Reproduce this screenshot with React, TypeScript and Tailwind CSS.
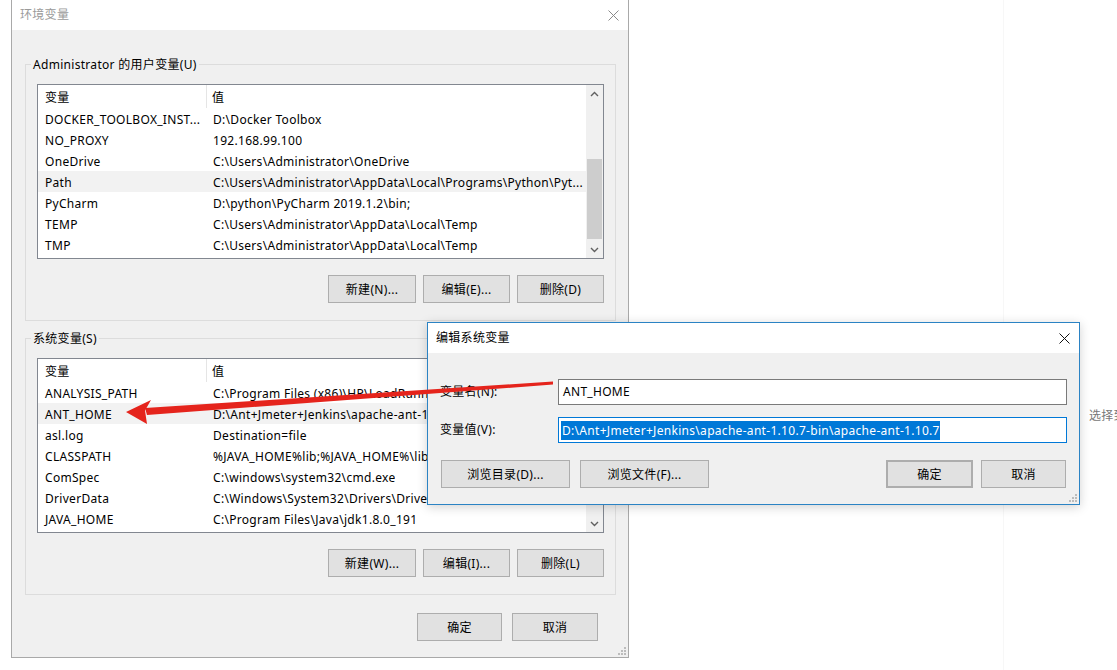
import React from "react";

type Row = [string, string];

const userRows: Row[] = [
  ["DOCKER_TOOLBOX_INST...", "D:\\Docker Toolbox"],
  ["NO_PROXY", "192.168.99.100"],
  ["OneDrive", "C:\\Users\\Administrator\\OneDrive"],
  ["Path", "C:\\Users\\Administrator\\AppData\\Local\\Programs\\Python\\Pyt..."],
  ["PyCharm", "D:\\python\\PyCharm 2019.1.2\\bin;"],
  ["TEMP", "C:\\Users\\Administrator\\AppData\\Local\\Temp"],
  ["TMP", "C:\\Users\\Administrator\\AppData\\Local\\Temp"],
];

const sysRows: Row[] = [
  ["ANALYSIS_PATH", "C:\\Program Files (x86)\\HP\\LoadRunner\\"],
  ["ANT_HOME", "D:\\Ant+Jmeter+Jenkins\\apache-ant-1.10.7-bin\\apache-ant-1.10.7"],
  ["asl.log", "Destination=file"],
  ["CLASSPATH", "%JAVA_HOME%lib;%JAVA_HOME%\\lib\\tools.jar"],
  ["ComSpec", "C:\\windows\\system32\\cmd.exe"],
  ["DriverData", "C:\\Windows\\System32\\Drivers\\DriverData"],
  ["JAVA_HOME", "C:\\Program Files\\Java\\jdk1.8.0_191"],
];

function Chevron({ up }: { up?: boolean }) {
  return (
    <svg width="9" height="6" viewBox="0 0 9 6">
      <path
        d={up ? "M1 5 L4.5 1.5 L8 5" : "M1 1 L4.5 4.5 L8 1"}
        fill="none"
        stroke="#606060"
        strokeWidth="1.4"
      />
    </svg>
  );
}

function CloseX({ color }: { color: string }) {
  return (
    <svg width="11" height="11" viewBox="0 0 11 11">
      <path d="M0.5 0.5 L10.5 10.5 M10.5 0.5 L0.5 10.5" stroke={color} strokeWidth="1" />
    </svg>
  );
}

function Grip() {
  return (
    <svg width="10" height="10" viewBox="0 0 10 10">
      <rect x="8" y="2" width="2" height="2" fill="#bcbcbc" />
      <rect x="8" y="5" width="2" height="2" fill="#bcbcbc" />
      <rect x="5" y="5" width="2" height="2" fill="#bcbcbc" />
      <rect x="8" y="8" width="2" height="2" fill="#bcbcbc" />
      <rect x="5" y="8" width="2" height="2" fill="#bcbcbc" />
      <rect x="2" y="8" width="2" height="2" fill="#bcbcbc" />
    </svg>
  );
}

function Btn({ children, className = "" }: { children: React.ReactNode; className?: string }) {
  return (
    <div
      className={`flex h-[28px] items-center justify-center border border-[#adadad] bg-[#e1e1e1] pt-[1px] text-black ${className}`}
    >
      {children}
    </div>
  );
}

function Scrollbar({ trackClass, thumbClass }: { trackClass: string; thumbClass: string }) {
  return (
    <div className="flex w-[17px] shrink-0 flex-col bg-[#f0f0f0]">
      <div className="flex h-[17px] items-center justify-center">
        <Chevron up />
      </div>
      <div className={`flex-1 px-[1px] ${trackClass}`}>
        <div className={`bg-[#cdcdcd] ${thumbClass}`} />
      </div>
      <div className="flex h-[17px] items-center justify-center">
        <Chevron />
      </div>
    </div>
  );
}

function VarList({
  rows,
  selected,
  trackClass,
  thumbClass,
}: {
  rows: Row[];
  selected: number;
  trackClass: string;
  thumbClass: string;
}) {
  return (
    <div className="flex h-[175px] border border-[#828790] bg-white">
      <div className="min-w-0 flex-1 overflow-hidden">
        <div className="flex h-[23px]">
          <div className="flex w-[169px] shrink-0 items-center border-r border-[#e5e5e5] pl-[7px] pt-[2px]">变量</div>
          <div className="flex items-center pl-[5px] pt-[2px]">值</div>
        </div>
        {rows.map(([k, v], i) => (
          <div
            key={k}
            className={`flex h-[21px] items-center whitespace-nowrap pt-[2px] ${i === selected ? "bg-[#f2f2f2]" : ""}`}
          >
            <div className="w-[170px] shrink-0 overflow-hidden pl-[7px]">{k}</div>
            <div className="min-w-0 overflow-hidden pl-[5px]">{v}</div>
          </div>
        ))}
      </div>
      <Scrollbar trackClass={trackClass} thumbClass={thumbClass} />
    </div>
  );
}

function GroupBox({
  label,
  className = "",
  children,
}: {
  label: string;
  className?: string;
  children: React.ReactNode;
}) {
  return (
    <div className={className}>
      <div className="flex h-[16px]">
        <div className="h-[8px] w-[6px] self-end border-l border-t border-[#dcdcdc]" />
        <span className="px-[2px] pt-[1px] leading-[16px]">{label}</span>
        <div className="h-[8px] flex-1 self-end border-r border-t border-[#dcdcdc]" />
      </div>
      <div className="border-x border-b border-[#dcdcdc] px-[11px] pb-[17px] pt-[12px]">{children}</div>
    </div>
  );
}

function MainWindow() {
  return (
    <div className="relative ml-[11px] flex h-[658px] w-[618px] shrink-0 flex-col border-x border-b border-[#a9a9a9]">
      <div className="flex h-[30px] items-center justify-between bg-white pl-[8px] pr-[9px]">
        <span className="text-[#9a9a9a]">环境变量</span>
        <CloseX color="#8a8a8a" />
      </div>
      <div className="flex flex-1 flex-col bg-[#f0f0f0]">
        <GroupBox label="Administrator 的用户变量(U)" className="ml-[13px] mr-[12px] mt-[26px]">
          <VarList rows={userRows} selected={3} trackClass="pt-[57px]" thumbClass="h-[80px]" />
          <div className="mt-[16px] flex justify-end gap-[7px]">
            <Btn className="w-[88px]">新建(N)...</Btn>
            <Btn className="w-[87px]">编辑(E)...</Btn>
            <Btn className="w-[87px]">删除(D)</Btn>
          </div>
        </GroupBox>
        <GroupBox label="系统变量(S)" className="ml-[13px] mr-[12px] mt-[9px]">
          <VarList rows={sysRows} selected={1} trackClass="pt-0" thumbClass="h-[70px]" />
          <div className="mt-[16px] flex justify-end gap-[7px]">
            <Btn className="w-[88px]">新建(W)...</Btn>
            <Btn className="w-[87px]">编辑(I)...</Btn>
            <Btn className="w-[87px]">删除(L)</Btn>
          </div>
        </GroupBox>
        <div className="mt-[18px] flex justify-end gap-[10px] pr-[30px]">
          <Btn className="w-[85px]">确定</Btn>
          <Btn className="w-[86px]">取消</Btn>
        </div>
      </div>
      <div className="absolute bottom-[2px] right-[2px]">
        <Grip />
      </div>
    </div>
  );
}

function EditDialog() {
  return (
    <div className="absolute left-[427px] top-[322px] flex h-[183px] w-[653px] flex-col border border-[#2b83c4] shadow-[0_2px_10px_rgba(0,0,0,0.18)]">
      <div className="flex h-[30px] items-center justify-between bg-white pl-[8px] pr-[9px]">
        <span>编辑系统变量</span>
        <CloseX color="#111111" />
      </div>
      <div className="relative flex flex-1 flex-col bg-[#f0f0f0] px-[12px] pt-[26px]">
        <div className="flex h-[26px] items-center">
          <span className="w-[118px] shrink-0">变量名(N):</span>
          <div className="flex h-[26px] flex-1 items-center border border-[#7a7a7a] bg-white pl-[4px]">ANT_HOME</div>
        </div>
        <div className="mt-[12px] flex h-[26px] items-center">
          <span className="w-[118px] shrink-0">变量值(V):</span>
          <div className="flex h-[26px] flex-1 items-center border border-[#0078d7] bg-white pl-[2px]">
            <span className="bg-[#0078d7] pl-[1px] leading-[19px] text-white">
              D:\Ant+Jmeter+Jenkins\apache-ant-1.10.7-bin\apache-ant-1.10.7
            </span>
          </div>
        </div>
        <div className="ml-[1px] mr-[1px] mt-[17px] flex items-center">
          <Btn className="w-[129px]">浏览目录(D)...</Btn>
          <Btn className="ml-[10px] w-[129px]">浏览文件(F)...</Btn>
          <div className="flex-1" />
          <Btn className="w-[87px] border-2 border-[#0078d7]">确定</Btn>
          <Btn className="ml-[8px] w-[85px]">取消</Btn>
        </div>
        <div className="absolute bottom-[2px] right-[2px]">
          <Grip />
        </div>
      </div>
    </div>
  );
}

function Arrow() {
  return (
    <svg
      className="pointer-events-none absolute left-0 top-0"
      width="1117"
      height="670"
      viewBox="0 0 1117 670"
    >
      <polygon points="553,381.5 553,384.5 147,415 145,408" fill="#e5241c" />
      <polygon points="126,412 151,400 145,410.5 147,424" fill="#e5241c" />
    </svg>
  );
}

export default function App() {
  return (
    <div className="relative h-[670px] w-[1117px] overflow-hidden bg-white font-['Noto_Sans','Noto_Sans_CJK_SC',sans-serif] text-[12px] tracking-[0.3px] text-black">
      <div className="flex h-full">
        <MainWindow />
        <div className="w-[374px] shrink-0" />
        <div className="flex-1 border-l border-[#f7f7f7] pl-[85px] pt-[407px]">
          <span className="whitespace-nowrap text-[#777777]">选择到环境</span>
        </div>
      </div>
      <EditDialog />
      <Arrow />
    </div>
  );
}
